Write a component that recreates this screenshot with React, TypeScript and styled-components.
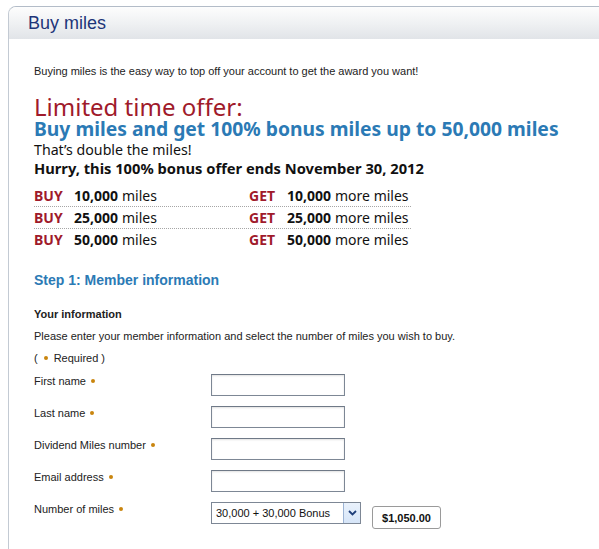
import styled, { createGlobalStyle } from 'styled-components';

const GlobalStyle = createGlobalStyle`
	html, body {
		margin: 0;
		padding: 0;
		background: #ffffff;
	}
	body {
		font-family: 'Liberation Sans', Arial, sans-serif;
		color: #222222;
	}
`;

const Page = styled.div`
	padding: 6px 0 0 8px;
`;

const Panel = styled.section`
	border: 1px solid #c3cad3;
	border-right: none;
	border-top-color: #b3bcc8;
	border-top-left-radius: 8px;
	overflow: hidden;
	background: #ffffff;
	min-height: 560px;
`;

const Header = styled.header`
	height: 32px;
	display: flex;
	align-items: center;
	padding-left: 19px;
	background: linear-gradient(to bottom, #fdfdfd 0%, #eef0f2 55%, #e1e4e8 100%);
`;

const Title = styled.h1`
	margin: 0;
	font-size: 18px;
	font-weight: 400;
	color: #1d3579;
	line-height: 20px;
`;

const Body = styled.div`
	padding: 25px 0 0 25px;
	display: flex;
	flex-direction: column;
`;

const Text = styled.p<{ $top?: number; $bold?: boolean }>`
	margin: ${(p) => p.$top ?? 0}px 0 0;
	font-size: 11px;
	line-height: 14px;
	font-weight: ${(p) => (p.$bold ? 700 : 400)};
	color: #222222;
`;

const Offer = styled.h2`
	margin: 17px 0 0;
	font-family: 'Noto Sans', sans-serif;
	font-weight: 400;
	font-size: 24px;
	line-height: 24px;
	color: #9f1a2b;
`;

const OfferHeading = styled.h3`
	margin: 0;
	font-family: 'Noto Sans', sans-serif;
	font-weight: 700;
	font-size: 19.3px;
	line-height: 20px;
	color: #2b7ab5;
`;

const OfferLine = styled.p<{ $bold?: boolean; $size: number; $lh: number; $top?: number }>`
	margin: ${(p) => p.$top ?? 0}px 0 0;
	font-family: 'Noto Sans', sans-serif;
	font-weight: ${(p) => (p.$bold ? 700 : 400)};
	font-size: ${(p) => p.$size}px;
	line-height: ${(p) => p.$lh}px;
	color: #111111;
`;

const MilesTable = styled.div`
	margin-top: 8px;
	width: 377px;
	display: flex;
	flex-direction: column;
`;

const MilesRow = styled.div<{ $last?: boolean }>`
	display: grid;
	grid-template-columns: 40px 175px 38px 1fr;
	height: 21px;
	align-items: center;
	border-bottom: 1px dotted ${(p) => (p.$last ? 'transparent' : '#a6a6a6')};
	font-family: 'Noto Sans', sans-serif;
	font-size: 14px;
	color: #111111;
`;

const Tag = styled.span`
	font-weight: 700;
	color: #9f1a2b;
`;

const Amount = styled.b`
	font-weight: 700;
	margin-right: 4px;
`;

const StepTitle = styled.h4`
	margin: 20px 0 0;
	font-size: 14px;
	line-height: 18px;
	font-weight: 700;
	color: #2b7ab5;
`;

const Dot = styled.span<{ $gap?: number }>`
	display: inline-block;
	width: 4px;
	height: 4px;
	border-radius: 50%;
	background: #c9850e;
	vertical-align: middle;
	margin: -2px ${(p) => p.$gap ?? 4}px 0 ${(p) => p.$gap ?? 5}px;
`;

const Form = styled.div`
	margin-top: 9px;
	display: flex;
	flex-direction: column;
	gap: 10px;
`;

const FormRow = styled.div`
	display: flex;
	align-items: flex-start;
	height: 22px;
`;

const Label = styled.label`
	width: 177px;
	font-size: 11px;
	line-height: 14px;
	color: #222222;
`;

const Input = styled.input`
	box-sizing: border-box;
	width: 134px;
	height: 22px;
	margin: 0;
	border: 1px solid #7d8795;
	border-top-color: #6f7987;
	box-shadow: inset 0 1px 2px rgba(0, 0, 0, 0.12);
	background: #ffffff;
`;

const Select = styled.div`
	box-sizing: border-box;
	width: 150px;
	height: 22px;
	display: flex;
	border: 1px solid #7d8795;
	background: #ffffff;
	font-size: 11px;
	color: #111111;
`;

const SelectValue = styled.span`
	flex: 1;
	padding-left: 4px;
	line-height: 20px;
`;

const SelectArrow = styled.span`
	width: 16px;
	display: flex;
	align-items: center;
	justify-content: center;
	background: linear-gradient(to bottom, #eaf2fc, #d6e5f8);
	border-left: 1px solid #9db4d4;
`;

const Price = styled.div`
	box-sizing: border-box;
	margin: 4px 0 0 11px;
	width: 69px;
	height: 23px;
	border: 1px solid #9a9a9a;
	border-radius: 3px;
	display: flex;
	align-items: center;
	justify-content: center;
	font-size: 11px;
	font-weight: 700;
	color: #111111;
`;

const rows = ['10,000', '25,000', '50,000'];
const fields = ['First name', 'Last name', 'Dividend Miles number', 'Email address'];

export default function App() {
	return (
		<Page>
			<GlobalStyle />
			<Panel>
				<Header>
					<Title>Buy miles</Title>
				</Header>
				<Body>
					<Text>Buying miles is the easy way to top off your account to get the award you want!</Text>
					<Offer>Limited time offer:</Offer>
					<OfferHeading>Buy miles and get 100% bonus miles up to 50,000 miles</OfferHeading>
					<OfferLine $size={14.2} $lh={19} $top={1}>
						That’s double the miles!
					</OfferLine>
					<OfferLine $size={14.7} $lh={18} $bold>
						Hurry, this 100% bonus offer ends November 30, 2012
					</OfferLine>
					<MilesTable>
						{rows.map((r, i) => (
							<MilesRow key={r} $last={i === rows.length - 1}>
								<Tag>BUY</Tag>
								<span>
									<Amount>{r}</Amount>miles
								</span>
								<Tag>GET</Tag>
								<span>
									<Amount>{r}</Amount>more miles
								</span>
							</MilesRow>
						))}
					</MilesTable>
					<StepTitle>Step 1: Member information</StepTitle>
					<Text $top={18} $bold>
						Your information
					</Text>
					<Text $top={8}>Please enter your member information and select the number of miles you wish to buy.</Text>
					<Text $top={8}>
						(<Dot $gap={6} />
						Required )
					</Text>
					<Form>
						{fields.map((f) => (
							<FormRow key={f}>
								<Label>
									{f}
									<Dot />
								</Label>
								<Input type="text" />
							</FormRow>
						))}
						<FormRow>
							<Label>
								Number of miles
								<Dot />
							</Label>
							<Select>
								<SelectValue>30,000 + 30,000 Bonus</SelectValue>
								<SelectArrow>
									<svg width="9" height="6" viewBox="0 0 9 6">
										<path d="M1 1 L4.5 4.5 L8 1" fill="none" stroke="#1f3f7a" strokeWidth="1.8" />
									</svg>
								</SelectArrow>
							</Select>
							<Price>$1,050.00</Price>
						</FormRow>
					</Form>
				</Body>
			</Panel>
		</Page>
	);
}
